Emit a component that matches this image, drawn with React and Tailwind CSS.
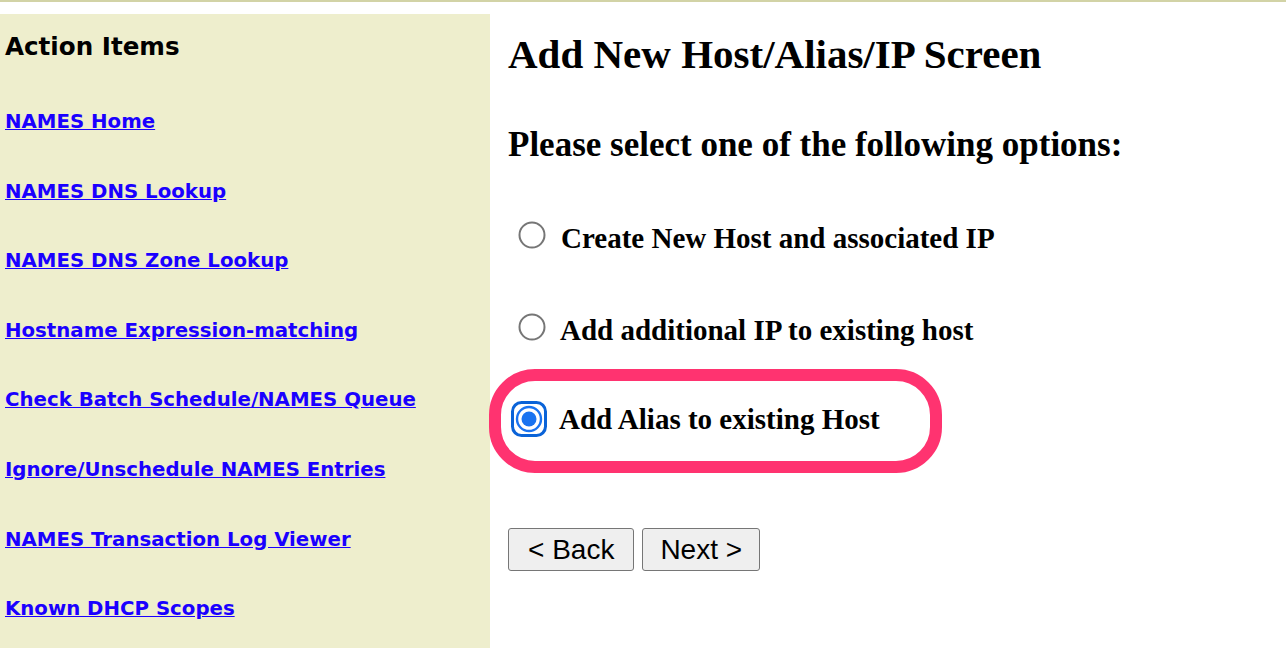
import React from "react";

const links = [
  "NAMES Home",
  "NAMES DNS Lookup",
  "NAMES DNS Zone Lookup",
  "Hostname Expression-matching",
  "Check Batch Schedule/NAMES Queue",
  "Ignore/Unschedule NAMES Entries",
  "NAMES Transaction Log Viewer",
  "Known DHCP Scopes",
];

function Radio({ checked }) {
  if (checked) {
    return (
      <svg width="36" height="36" viewBox="0 0 36 36" className="shrink-0 mt-[-1px]">
        <rect x="1.5" y="1.5" width="33" height="33" rx="9" fill="none" stroke="#0a63d8" strokeWidth="3" />
        <circle cx="18" cy="18" r="12" fill="none" stroke="#1a73f0" strokeWidth="2.4" />
        <circle cx="18" cy="18" r="7.5" fill="#1a73f0" />
      </svg>
    );
  }
  return (
    <svg width="28" height="28" viewBox="0 0 28 28" className="shrink-0">
      <circle cx="14" cy="14" r="12.5" fill="#fff" stroke="#767676" strokeWidth="2" />
    </svg>
  );
}

export default function App() {
  return (
    <div className="w-[1286px] h-[648px] bg-white overflow-hidden flex flex-col">
      <div className="h-[2px] bg-[#d2d3a6] shrink-0" />
      <div className="flex flex-1 pt-[12px]">
        <div className="w-[490px] bg-[#eeeecd] shrink-0 flex flex-col pl-[5px] pt-[18px] font-['DejaVu_Sans',Verdana,sans-serif] font-bold">
          <div className="text-[24.6px] leading-[30px] text-black">Action Items</div>
          <div className="flex flex-col gap-[45.6px] mt-[48px]">
            {links.map((l) => (
              <a key={l} href="#" className="text-[#1a00ff] underline text-[19.75px] leading-[24px] w-fit">
                {l}
              </a>
            ))}
          </div>
        </div>
        <div className="flex-1 pl-[18px] pt-[17px] font-['Liberation_Serif','Times_New_Roman',serif] font-bold text-black">
          <h1 className="text-[41px] leading-[46px]">Add New Host/Alias/IP Screen</h1>
          <h2 className="text-[35px] leading-[40px] mt-[48px]">Please select one of the following options:</h2>
          <div className="flex items-start gap-[15px] pl-[10px] mt-[56px] text-[29px] leading-[34px]">
            <Radio />
            <span>Create New Host and associated IP</span>
          </div>
          <div className="flex items-start gap-[14px] pl-[10px] mt-[58px] text-[29px] leading-[34px]">
            <Radio />
            <span>Add additional IP to existing host</span>
          </div>
          <div className="ml-[-19px] mt-[22px] w-[453px] h-[104px] rounded-[46px] border-[12px] border-[#ff3370] flex items-start pl-[10px] pt-[21px] gap-[12px] text-[29px] leading-[34px]">
            <Radio checked />
            <span>Add Alias to existing Host</span>
          </div>
          <div className="flex gap-[8px] mt-[55px] font-['Liberation_Sans',Arial,sans-serif] font-normal">
            <button className="h-[43px] px-[19px] bg-[#efefef] border border-[#767676] rounded-[3px] text-[28px] leading-[30px]">&lt; Back</button>
            <button className="h-[43px] px-[17px] bg-[#efefef] border border-[#767676] rounded-[3px] text-[28px] leading-[30px]">Next &gt;</button>
          </div>
        </div>
      </div>
    </div>
  );
}
